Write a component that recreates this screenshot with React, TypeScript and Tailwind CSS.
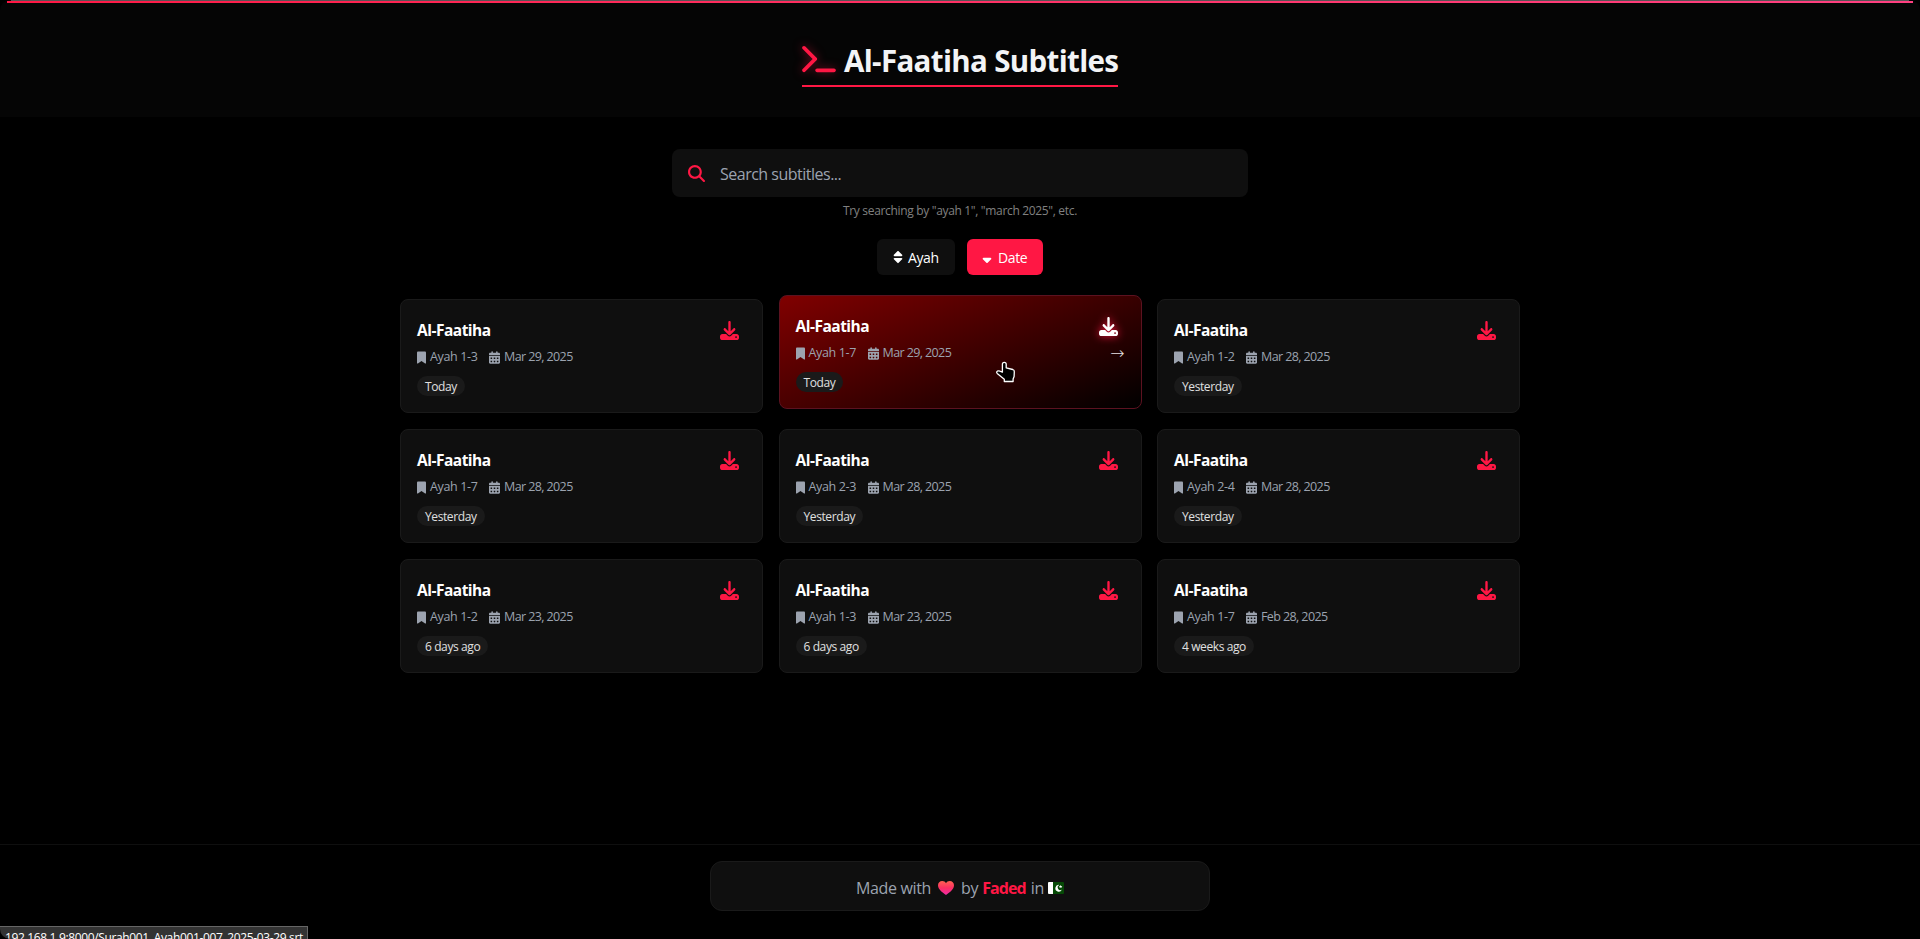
import React from "react";
import { FaTerminal, FaMagnifyingGlass, FaSort, FaSortDown, FaBookmark, FaCalendarDays, FaDownload } from "react-icons/fa6";

type Item = { range: string; date: string; age: string; active?: boolean };

const items: Item[] = [
  { range: "1-3", date: "Mar 29, 2025", age: "Today" },
  { range: "1-7", date: "Mar 29, 2025", age: "Today", active: true },
  { range: "1-2", date: "Mar 28, 2025", age: "Yesterday" },
  { range: "1-7", date: "Mar 28, 2025", age: "Yesterday" },
  { range: "2-3", date: "Mar 28, 2025", age: "Yesterday" },
  { range: "2-4", date: "Mar 28, 2025", age: "Yesterday" },
  { range: "1-2", date: "Mar 23, 2025", age: "6 days ago" },
  { range: "1-3", date: "Mar 23, 2025", age: "6 days ago" },
  { range: "1-7", date: "Feb 28, 2025", age: "4 weeks ago" },
];

function HandCursor() {
  return (
    <svg className="absolute left-[215px] top-[65px] h-[22px] w-[21px]" viewBox="-1 -1 21 22">
      <path
        d="M6.4 10.2V2.2a1.9 1.9 0 0 1 3.8 0v3.6l6.6 1.7q1.6.5 1.5 2.2l-.2 4.8-1 2.4v2.6H8.3v-2.2L1.2 11.4Q0 10 1.3 9.2q1.2-.6 2.6 0z"
        fill="#000"
        stroke="#fff"
        strokeWidth="1.3"
        strokeLinejoin="round"
      />
    </svg>
  );
}

function Heart() {
  return (
    <svg className="ml-[7px] mr-[7px] h-[14px] w-4 shrink-0" viewBox="0 0 16 14">
      <defs>
        <linearGradient id="heart" x1="0" y1="0" x2="0" y2="1">
          <stop offset="0" stopColor="#ff6152" />
          <stop offset="0.5" stopColor="#fb2f63" />
          <stop offset="1" stopColor="#f02aa8" />
        </linearGradient>
      </defs>
      <path d="M8 14C5.500 12.300 0 8.800 0 4.300 0 1.800 1.900 0 4.200 0 5.900 0 7.300.9 8 2.200 8.700.9 10.100 0 11.800 0 14.100 0 16 1.800 16 4.300 16 8.800 10.500 12.300 8 14z" fill="url(#heart)" />
    </svg>
  );
}

function Flag() {
  return (
    <svg className="ml-1 h-3 w-4 shrink-0" viewBox="0 0 16 12">
      <rect width="16" height="12" rx="1" fill="#064a06" />
      <path d="M1 0h4v12H1a1 1 0 0 1-1-1V1a1 1 0 0 1 1-1z" fill="#fff" />
      <path d="M11.200 2.900A3.400 3.400 0 1 0 13.800 7.800 2.600 2.600 0 1 1 11.200 2.900z" fill="#fff" />
      <path d="M12.600 2.900l.5 1.100 1.200.1-.9.800.3 1.200-1.100-.6-1.100.6.3-1.200-.9-.8 1.200-.1z" fill="#fff" />
    </svg>
  );
}

function Card({ item }: { item: Item }) {
  const active = item.active;
  return (
    <article
      className={`relative flex h-[114px] justify-between rounded-lg border pl-4 pr-[23px] pt-[18px] ${
        active
          ? "-translate-y-1 border-[#5c1220] bg-[linear-gradient(158deg,#800000,#000000)]"
          : "border-[#1a1a1a] bg-[#0f0f0f]"
      }`}
    >
      <div>
        <h2 className="h-6 whitespace-nowrap text-[15.5px] font-bold leading-6 tracking-[-0.5px] text-white">Al-Faatiha</h2>
        <div className="mt-[5px] flex h-5 items-center whitespace-nowrap text-[12.5px] leading-5 tracking-[-0.6px] text-[#9ca3af]">
          <FaBookmark className="mr-1 h-[13px] w-[9px] shrink-0" />
          <span className="w-[59px] tracking-[-0.35px]">Ayah {item.range}</span>
          <FaCalendarDays className="mr-1 h-[13px] w-[11px] shrink-0" />
          <span>{item.date}</span>
        </div>
        <span className="mt-[9px] inline-block h-5 whitespace-nowrap rounded-full bg-[#1a1a1a] px-2 text-[12px] leading-[21px] tracking-[-0.4px] text-[#e0e0e0]">
          {item.age}
        </span>
      </div>
      <FaDownload className={`mt-[3px] size-[19px] ${active ? "text-white drop-shadow-[0_0_4px_#ff1744]" : "text-[#ff1744]"}`} />
      {active && (
        <>
          <span className="absolute right-4 top-[47px] font-['DejaVu_Sans',sans-serif] text-[17px] font-light leading-5 text-white/90">→</span>
          <HandCursor />
        </>
      )}
    </article>
  );
}

export default function App() {
  return (
    <div className="bg-black">
      <div className="relative flex h-[939px] w-[1920px] flex-col overflow-hidden rounded-bl-[10px] bg-black font-['Open_Sans','Noto_Sans',sans-serif]">
        <header className="flex h-[117px] flex-col items-center rounded-t-[10px] bg-[#050505]">
          <div className="h-px w-[1898px] bg-[#555]" />
          <div className="h-[2px] w-[1906px] bg-linear-to-r from-[#ff1744] to-[#ff4081]" />
          <div className="mt-[32px] flex h-[52px] w-[316px] items-start border-b-2 border-[#ff1744]">
            <FaTerminal className="mt-[9px] h-[30px] w-[34px] shrink-0 text-[#ff1744] drop-shadow-[0_0_5px_rgba(255,23,68,0.5)]" />
            <h1 className="ml-2 whitespace-nowrap text-[29.5px] font-bold leading-[51px] tracking-[-0.65px] text-[#f3f4f6]">Al-Faatiha Subtitles</h1>
          </div>
        </header>
        <main className="flex flex-col items-center pt-8">
          <div className="flex h-12 w-[576px] items-center rounded-lg bg-[#0f0f0f] pl-4">
            <FaMagnifyingGlass className="mt-px size-[17px] text-[#ff1744]" />
            <span className="ml-[15px] mt-[2px] text-[16px] tracking-[-0.5px] text-[#9ca3af]">Search subtitles...</span>
          </div>
          <p className="mt-1 h-5 text-[12px] leading-[20px] tracking-[-0.33px] text-[#808080]">Try searching by "ayah 1", "march 2025", etc.</p>
          <div className="mt-[18px] flex gap-3 text-[14px] leading-[38px] tracking-[-0.4px] text-white">
            <button className="flex h-9 w-[78px] rounded-md bg-[#0f0f0f] pl-4"><FaSort className="mr-[5px] mt-[11px] h-[14px] w-[10px]" />Ayah</button>
            <button className="flex h-9 w-[76px] rounded-md bg-[#ff1744] pl-[15px]"><FaSortDown className="mr-[6px] mt-[11px] h-[14px] w-[10px]" />Date</button>
          </div>
          <section className="mt-6 grid grid-cols-[363px_363px_363px] gap-x-[15.5px] gap-y-4">
            {items.map((item, i) => <Card key={i} item={item} />)}
          </section>
        </main>
        <footer className="mt-auto flex h-[95px] justify-center border-t border-[#0f0f0f] pt-4">
          <div className="flex h-[50px] w-[500px] items-center whitespace-nowrap rounded-xl border border-[#1a1a1a] bg-[#0f0f0f] pl-[145px] pt-[3px] text-[16px] tracking-[-0.35px] text-[#9ca3af]">
            <span>Made with</span>
            <Heart />
            <span>by</span>
            <span className="ml-1 font-bold tracking-[-0.9px] text-[#ff1744]">Faded</span>
            <span className="ml-[5px]">in</span>
            <Flag />
          </div>
        </footer>
        <div className="absolute left-0 top-[926px] h-[13px] w-[308px] whitespace-nowrap border-r border-t border-[#666] bg-[#333] pl-[5px] pt-[2px] text-[12px] leading-[18px] tracking-[-0.36px] text-white">
          192.168.1.9:8000/Surah001_Ayah001-007_2025-03-29.srt
        </div>
      </div>
    </div>
  );
}
